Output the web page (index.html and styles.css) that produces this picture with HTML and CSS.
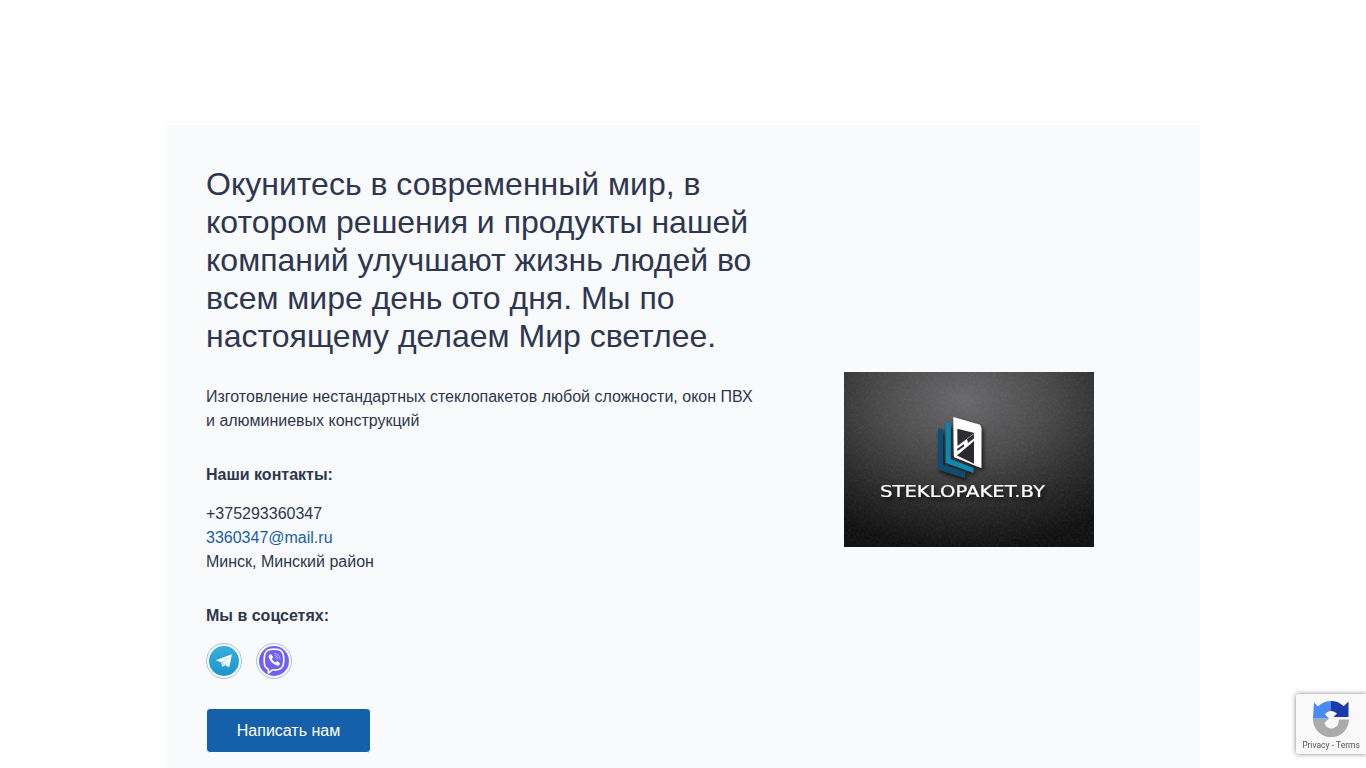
FILE: index.html
```html
<!DOCTYPE html>
<html lang="ru">
<head>
<meta charset="utf-8">
<title>Steklopaket.by</title>
<link rel="stylesheet" href="styles.css">
</head>
<body>
<main class="panel">
  <section class="info">
    <h1 class="title">Окунитесь в современный мир, в котором решения и продукты нашей компаний улучшают жизнь людей во всем мире день ото дня. Мы по настоящему делаем Мир светлее.</h1>
    <p class="lead">Изготовление нестандартных стеклопакетов любой сложности, окон ПВХ и алюминиевых конструкций</p>
    <h2 class="label">Наши контакты:</h2>
    <div class="contacts">
      <div>+375293360347</div>
      <a class="link" href="#">3360347@mail.ru</a>
      <div>Минск, Минский район</div>
    </div>
    <h2 class="label">Мы в соцсетях:</h2>
    <div class="socials">
      <a class="social" href="#" aria-label="Telegram">
        <svg viewBox="0 0 30 30" width="30" height="30">
          <defs><linearGradient id="tg" x1="0" y1="0" x2="0" y2="1"><stop offset="0" stop-color="#37aee2"/><stop offset="1" stop-color="#1e96c8"/></linearGradient></defs>
          <circle cx="15" cy="15" r="15" fill="url(#tg)"/>
          <path d="M6.700 14.300 21.900 8.500c.6-.2 1 .2.9.9l-2.400 11.200c-.1.7-.6.8-1.100.5l-3.600-2.600-1.800 1.700c-.2.2-.4.300-.7.300l.3-3.800z" fill="#f2f8fc"/>
          <path d="M13.400 20.600c-.3 0-.3-.1-.4-.4l-1.100-3.600 7.900-5-6.100 5.200z" fill="#c8daea"/>
          <path d="M14 17 16.900 19 15 20.300 13.700 20.500z" fill="#dbe8f2"/>
        </svg>
      </a>
      <a class="social" href="#" aria-label="Viber">
        <svg viewBox="0 0 30 30" width="30" height="30">
          <circle cx="15" cy="15" r="15" fill="#7360f2"/>
          <g transform="translate(15 14.500) scale(1.220) translate(-15 -14.500)">
            <path d="M15 5.200c-2.200 0-4.200.2-5.500 1.200C7.700 7.700 7 9.600 7 13.200v2.600c0 3 1 5 3.400 6v3.200l3-2.700c.6.050 1.100.050 1.600.050 2.300 0 4.300-.2 5.600-1.300 1.500-1.300 2.400-3 2.400-6.200v-1.700c0-3.500-.7-5.400-2.400-6.700C19.300 5.400 17.200 5.200 15 5.200z" fill="none" stroke="#fff" stroke-width="1.300" stroke-linejoin="round"/>
            <path d="M11.700 9.600c.5-.3 1-.2 1.300.2l1 1.400c.3.400.2.900-.1 1.200l-.6.500c.3 1.300 1.400 2.600 2.900 3.200l.6-.7c.3-.3.800-.4 1.200-.1l1.400 1c.5.400.5.900.2 1.400-.5.800-1.300 1.200-2.100.9-3.300-1.200-5.600-3.500-6.800-6.600-.3-.9 0-1.800 1-2.400z" fill="#fff"/>
            <path d="M15.400 8.800c2.700.2 4.400 1.900 4.500 4.600M15.700 10.500c1.600.1 2.400 1 2.500 2.600M16 12c.6 0 .9.400 1 1" fill="none" stroke="#cfc8fa" stroke-width=".6" stroke-linecap="round"/>
          </g>
        </svg>
      </a>
    </div>
    <button class="cta" type="button">Написать нам</button>
  </section>
  <aside class="brand">
    <svg class="logo" viewBox="0 0 250 175" width="250" height="175" role="img" aria-label="Steklopaket.by">
      <defs>
        <radialGradient id="wall" cx="48%" cy="16%" r="85%">
          <stop offset="0" stop-color="#69696b"/>
          <stop offset=".4" stop-color="#4a4a4b"/>
          <stop offset=".75" stop-color="#272727"/>
          <stop offset="1" stop-color="#111"/>
        </radialGradient>
        <linearGradient id="blueA" x1="0" y1="0" x2="0" y2="1"><stop offset="0" stop-color="#0e7fa8"/><stop offset="1" stop-color="#0f8cb3"/></linearGradient>
        <linearGradient id="blueB" x1="0" y1="0" x2="0" y2="1"><stop offset="0" stop-color="#0d4f73"/><stop offset="1" stop-color="#0b4d72"/></linearGradient>
        <filter id="grain" x="0" y="0" width="100%" height="100%">
          <feTurbulence type="fractalNoise" baseFrequency=".4" numOctaves="4" seed="7"/>
          <feColorMatrix values="0 0 0 0 1 0 0 0 0 1 0 0 0 0 1 .55 0 0 0 -.2"/>
        </filter>
        <filter id="drop" x="-20%" y="-20%" width="150%" height="150%"><feDropShadow dx="2" dy="3" stdDeviation="2" flood-color="#000" flood-opacity=".7"/></filter>
      </defs>
      <rect width="250" height="175" fill="url(#wall)"/>
      <rect width="250" height="175" filter="url(#grain)" opacity=".18"/>
      <g filter="url(#drop)">
        <path d="M94 56 99 57.300 99 93 121 100 121 106 94 97.300z" fill="url(#blueB)"/>
        <path d="M101.700 50 106.700 51.700 106.700 87.300 129.300 96 129.300 100.700 101.700 90.700z" fill="url(#blueA)"/>
        <path d="M109.300 45 136 52.700 137.300 56 137.300 96 110 85z" fill="#fff"/>
        <path d="M113.300 56.700 130.500 61 113.500 74z" fill="#2f2f30"/>
        <path d="M113 77 120 72 120 74.500 113.500 79z" fill="#2f2f30"/>
        <path d="M113 83.500 130 69 130 91.700z" fill="#2c2c2d"/>
        <path d="M123 67 130 62 130 66.500 124 71z" fill="#2f2f30"/>
      </g>
      <text class="logo-text" x="36" y="125" textLength="165" lengthAdjust="spacingAndGlyphs" filter="url(#drop)">STEKLOPAKET.BY</text>
    </svg>
  </aside>
</main>
<aside class="recaptcha" aria-label="reCAPTCHA">
  <svg class="recaptcha-icon" viewBox="0 0 36 36" width="36" height="36">
    <path d="M0 17.500H16L11.500 22A7 7 0 0 0 25.500 18.500H36A18 18 0 0 1 0 18z" fill="#ababab"/>
    <path d="M18 0A18 18 0 0 0 5 5.500L1 1.500 0 17.500H16L12 13.500A8 8 0 0 1 18 10z" fill="#4a8af4"/>
    <path d="M18 0A18 18 0 0 1 30.700 5.300L35.500 .5V16H20.500L24 12.500A8 8 0 0 0 18 10z" fill="#1c3aa9"/>
  </svg>
  <div class="recaptcha-links">Privacy - Terms</div>
</aside>
</body>
</html>
```
FILE: styles.css
```css
* { box-sizing: border-box; }
html, body { margin: 0; padding: 0; background: #fff; }
body {
  padding-top: 125px;
  font-family: "Liberation Sans", Arial, sans-serif;
  font-size: 16px;
  line-height: 24px;
  color: #2e3650;
}
.panel {
  width: 1034px;
  margin: 0 auto;
  padding: 40px;
  background: #f9fafc;
  display: grid;
  grid-template-columns: 3fr 2fr;
}
.info { padding-right: 24px; }
.title {
  margin: 0 0 30px;
  font-size: 32px;
  line-height: 38px;
  font-weight: 400;
}
.lead { margin: 0 0 30px; }
.label {
  margin: 0 0 15px;
  font-size: 16px;
  line-height: 24px;
  font-weight: 700;
}
.contacts { margin-bottom: 30px; }
.link { color: #1560ab; text-decoration: none; display: block; }
.socials { display: flex; gap: 14px; margin: 0 0 29px; }
.social {
  width: 36px;
  height: 36px;
  border: 1px solid #a3c5e6;
  border-radius: 50%;
  display: flex;
  align-items: center;
  justify-content: center;
}
.social svg { display: block; flex: none; }
.cta {
  display: block;
  width: 165px;
  height: 45px;
  padding: 0;
  border: 1px solid #f9fafc;
  border-radius: 4px;
  background: #1560ab;
  color: #fff;
  font: 16px/24px "Liberation Sans", Arial, sans-serif;
}
.brand { display: flex; align-items: center; justify-content: center; }
.logo { display: block; }
.logo-text {
  font-family: "DejaVu Sans", sans-serif;
  font-size: 15px;
  font-weight: 400;
  fill: #fff;
  stroke: #fff;
  stroke-width: .15;
}
.recaptcha {
  position: fixed;
  right: 0;
  top: 694px;
  width: 70px;
  height: 60px;
  background: #f9f9f9;
  border-radius: 2px 0 0 2px;
  box-shadow: 0 0 5px #808080;
  display: flex;
  flex-direction: column;
  align-items: center;
}
.recaptcha-icon { margin-top: 7px; display: block; }
.recaptcha-links {
  font: 8.500px/10px Roboto, "Liberation Sans", sans-serif;
  color: #555;
  margin-top: 3px;
  white-space: nowrap;
}
```
